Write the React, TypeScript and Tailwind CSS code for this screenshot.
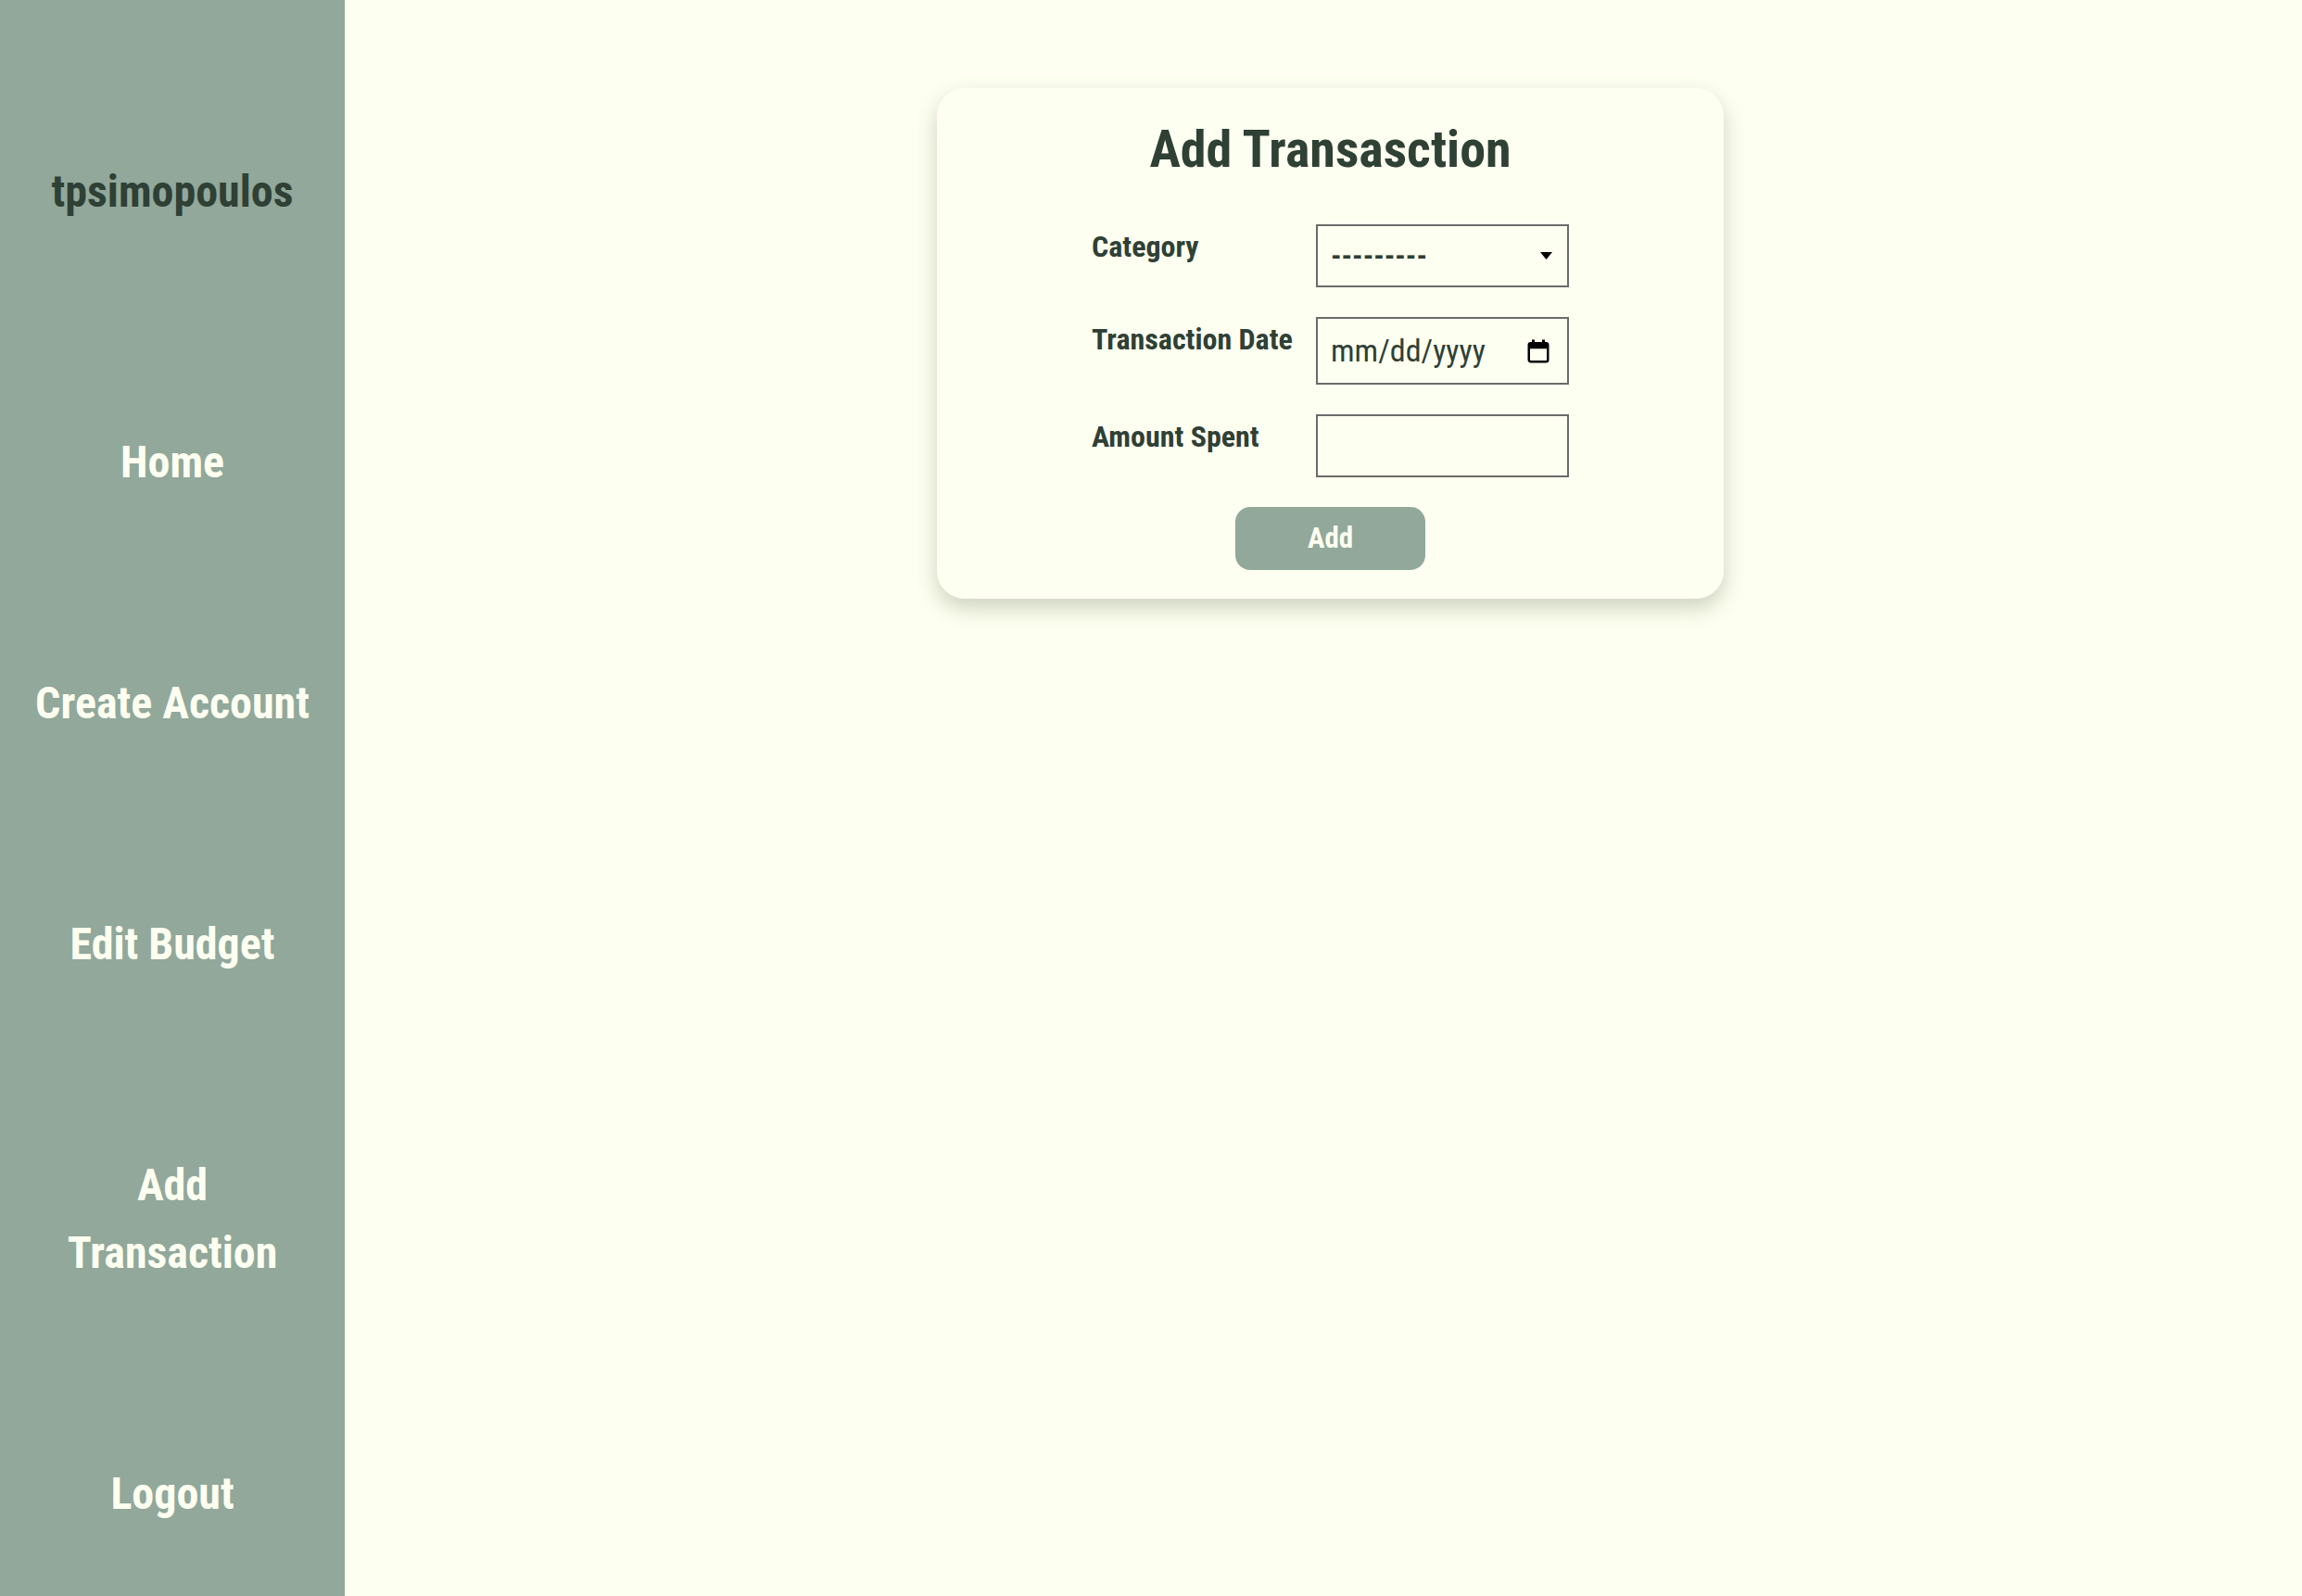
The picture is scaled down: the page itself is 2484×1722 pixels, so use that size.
import React from "react";

const font = { fontFamily: '"Roboto Condensed", Roboto, "Liberation Sans", sans-serif' };

function CalendarIcon() {
  return (
    <svg width="24" height="26" viewBox="0 0 24 26" className="shrink-0">
      <rect x="1.75" y="4.25" width="20.5" height="20" rx="2" fill="none" stroke="#000" strokeWidth="2.5" />
      <rect x="1.75" y="4.25" width="20.5" height="6" fill="#000" />
      <rect x="5" y="0.5" width="3" height="5" fill="#000" />
      <rect x="16" y="0.5" width="3" height="5" fill="#000" />
    </svg>
  );
}

export default function App() {
  const nav = ["Home", "Create Account", "Edit Budget", "Add Transaction", "Logout"];
  return (
    <div className="flex w-full h-[1722px] bg-[#fdfff0]" style={font}>
      <aside className="w-[372px] shrink-0 h-full bg-[#91a89b] flex flex-col items-center pt-[170px]">
        <div className="text-[48px] leading-[73px] font-bold text-[#2f4035]">tpsimopoulos</div>
        <nav className="flex flex-col items-center gap-[187px] mt-[219px] w-full">
          {nav.map((n) => (
            <a
              key={n}
              className="block text-center text-[48px] leading-[73px] font-bold text-[#fdfff0] px-[16px]"
            >
              {n === "Add Transaction" ? (
                <>
                  Add
                  <br />
                  Transaction
                </>
              ) : (
                n
              )}
            </a>
          ))}
        </nav>
      </aside>
      <main className="flex-1 flex justify-center pt-[95px]">
        <div className="ml-[15px] w-[849px] h-[551px] rounded-[30px] bg-[#fdfff0] shadow-[0_10px_22px_rgba(60,70,40,0.24)] flex flex-col items-center pt-[26px]">
          <h1 className="text-[56px] leading-[80px] font-bold text-[#2f4035]">Add Transasction</h1>
          <div className="mt-[41px] grid grid-cols-[242px_273px] gap-y-[32px]">
            <label className="text-[32px] leading-[40px] font-bold text-[#2f4035] pt-[4px]">Category</label>
            <div className="h-[68px] border-2 border-[#6b6b6b] flex items-center justify-between pl-[14px] pr-[16px]">
              <span className="text-[32px] font-bold text-[#2f4035]">---------</span>
              <svg width="13" height="8" viewBox="0 0 13 8"><path d="M0 0h13L6.5 8z" fill="#000" /></svg>
            </div>
            <label className="text-[32px] leading-[40px] font-bold text-[#2f4035] pt-[4px] whitespace-nowrap">Transaction Date</label>
            <div className="h-[73px] border-2 border-[#6b6b6b] flex items-center justify-between pl-[14px] pr-[19px]">
              <span className="text-[34px] text-[#2f4035]">mm/dd/yyyy</span>
              <CalendarIcon />
            </div>
            <label className="text-[32px] leading-[40px] font-bold text-[#2f4035] pt-[4px]">Amount Spent</label>
            <div className="h-[68px] border-2 border-[#6b6b6b]" />
          </div>
          <button className="mt-[32px] w-[205px] h-[68px] rounded-[16px] bg-[#91a89b] text-[#fdfff0] text-[31px] font-bold">
            Add
          </button>
        </div>
      </main>
    </div>
  );
}
